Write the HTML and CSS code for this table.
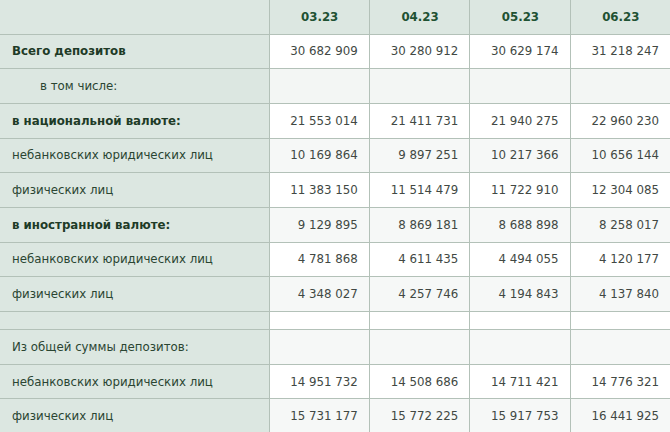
FILE: index.html
```html
<!DOCTYPE html>
<html lang="ru">
<head>
<meta charset="utf-8">
<title>Депозиты</title>
<link rel="stylesheet" href="styles.css">
</head>
<body>
<table class="deposits">
  <colgroup>
    <col class="c-label">
    <col class="c-num">
    <col class="c-num">
    <col class="c-num">
    <col class="c-num">
  </colgroup>
  <thead>
    <tr class="head">
      <th class="lab"></th>
      <th>03.23</th>
      <th>04.23</th>
      <th>05.23</th>
      <th>06.23</th>
    </tr>
  </thead>
  <tbody>
    <tr class="odd"><td class="lab bold">Всего депозитов</td><td>30 682 909</td><td>30 280 912</td><td>30 629 174</td><td>31 218 247</td></tr>
    <tr class="even"><td class="lab indent">в том числе:</td><td class="shade"></td><td class="shade"></td><td class="shade"></td><td class="shade"></td></tr>
    <tr class="odd"><td class="lab bold">в национальной валюте:</td><td>21 553 014</td><td>21 411 731</td><td>21 940 275</td><td>22 960 230</td></tr>
    <tr class="even"><td class="lab">небанковских юридических лиц</td><td>10 169 864</td><td>9 897 251</td><td>10 217 366</td><td>10 656 144</td></tr>
    <tr class="odd"><td class="lab">физических лиц</td><td>11 383 150</td><td>11 514 479</td><td>11 722 910</td><td>12 304 085</td></tr>
    <tr class="even"><td class="lab bold">в иностранной валюте:</td><td>9 129 895</td><td>8 869 181</td><td>8 688 898</td><td>8 258 017</td></tr>
    <tr class="odd"><td class="lab">небанковских юридических лиц</td><td>4 781 868</td><td>4 611 435</td><td>4 494 055</td><td>4 120 177</td></tr>
    <tr class="even"><td class="lab">физических лиц</td><td>4 348 027</td><td>4 257 746</td><td>4 194 843</td><td>4 137 840</td></tr>
    <tr class="odd spacer"><td class="lab"></td><td></td><td></td><td></td><td></td></tr>
    <tr class="even"><td class="lab">Из общей суммы депозитов:</td><td></td><td></td><td></td><td></td></tr>
    <tr class="odd"><td class="lab">небанковских юридических лиц</td><td>14 951 732</td><td>14 508 686</td><td>14 711 421</td><td>14 776 321</td></tr>
    <tr class="even"><td class="lab">физических лиц</td><td>15 731 177</td><td>15 772 225</td><td>15 917 753</td><td>16 441 925</td></tr>
  </tbody>
</table>
</body>
</html>
```
FILE: styles.css
```css
html, body {
  margin: 0;
  padding: 0;
  overflow: hidden;
  background: #ffffff;
}

.deposits {
  border-collapse: collapse;
  table-layout: fixed;
  width: 671px;
  font-family: "DejaVu Sans", Verdana, sans-serif;
  font-size: 11.8px;
  color: #414843;
}

.c-label { width: 268px; }
.c-num { width: 100px; }

.deposits th,
.deposits td {
  border: 1px solid #b3c1b8;
  padding: 0 11px 0 12px;
  height: 34.7px;
  box-sizing: border-box;
  vertical-align: middle;
  white-space: nowrap;
}

.deposits tr > :first-child { border-left: none; }
.deposits thead th { border-top: none; }

.head th {
  background: #dce7e1;
  color: #1f5233;
  font-weight: bold;
  text-align: center;
  height: 34px;
  padding-top: 1px;
}

.deposits td { text-align: right; }

.odd td { background: #ffffff; }
.even td { background: #f6f8f7; }
.deposits td.shade { background: #f3f6f4; }

.deposits td.lab {
  background: #dce7e1;
  text-align: left;
  color: #2a4532;
}

.deposits td.bold {
  font-weight: bold;
  color: #1e3b27;
}

.deposits td.indent { padding-left: 40px; }

.deposits .spacer td { height: 18px; }
```
